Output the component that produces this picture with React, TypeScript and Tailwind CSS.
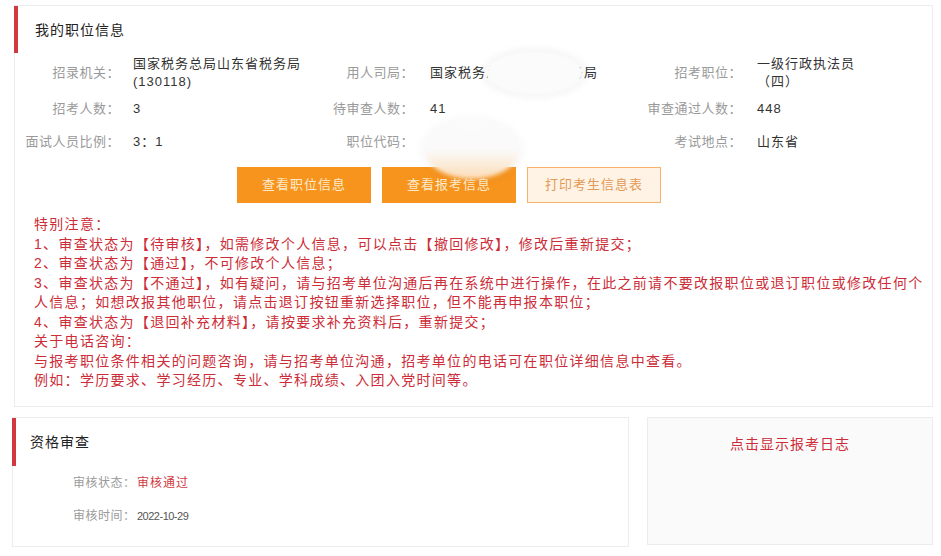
import React from 'react'

const Row = ({ cells, className }: { cells: React.ReactNode[]; className: string }) => (
  <div className={`grid grid-cols-[105px_194px_100px_228px_100px_1fr] items-center ${className}`}>
    {cells}
  </div>
)

const Label = ({ children }: { children: React.ReactNode }) => (
  <div className="text-right text-[13px] tracking-[0.5px] text-[#9a9a9a]">{children}</div>
)

const Value = ({ children, pl, extra = '' }: { children: React.ReactNode; pl: string; extra?: string }) => (
  <div className={`${pl} text-[13px] tracking-[1px] leading-[18px] text-[#333] ${extra}`}>{children}</div>
)

const notes = [
  '特别注意：',
  '1、审查状态为【待审核】，如需修改个人信息，可以点击【撤回修改】，修改后重新提交；',
  '2、审查状态为【通过】，不可修改个人信息；',
  '3、审查状态为【不通过】，如有疑问，请与招考单位沟通后再在系统中进行操作，在此之前请不要改报职位或退订职位或修改任何个人信息；如想改报其他职位，请点击退订按钮重新选择职位，但不能再申报本职位；',
  '4、审查状态为【退回补充材料】，请按要求补充资料后，重新提交；',
  '关于电话咨询：',
  '与报考职位条件相关的问题咨询，请与招考单位沟通，招考单位的电话可在职位详细信息中查看。',
  '例如：学历要求、学习经历、专业、学科成绩、入团入党时间等。',
]

export default function App() {
  return (
    <div className="w-[941px] h-[556px] bg-white pt-[5px] font-['Liberation_Sans','Noto_Sans_CJK_SC',sans-serif] overflow-hidden">
      {/* 我的职位信息 */}
      <div className="relative ml-[14px] w-[919px] h-[402px] border border-[#ececec] bg-white">
        <div className="h-[47px] flex items-center pt-[1px] pl-[17px] border-l-4 border-[#d2393f] -ml-px">
          <span className="text-[14px] tracking-[1px] text-[#222]">我的职位信息</span>
        </div>

        <Row
          className="h-[40px]"
          cells={[
            <Label key="l1">招录机关：</Label>,
            <Value key="v1" pl="pl-[13px]">国家税务总局山东省税务局(130118)</Value>,
            <Label key="l2">用人司局：</Label>,
            <Value key="v2" pl="pl-[16px]">国家税务总局山东省税务局</Value>,
            <Label key="l3">招考职位：</Label>,
            <Value key="v3" pl="pl-[15px]" extra="w-[120px]">一级行政执法员（四）</Value>,
          ]}
        />
        <Row
          className="h-[32px]"
          cells={[
            <Label key="l1">招考人数：</Label>,
            <Value key="v1" pl="pl-[13px]">3</Value>,
            <Label key="l2">待审查人数：</Label>,
            <Value key="v2" pl="pl-[16px]">41</Value>,
            <Label key="l3">审查通过人数：</Label>,
            <Value key="v3" pl="pl-[15px]">448</Value>,
          ]}
        />
        <Row
          className="h-[34px]"
          cells={[
            <Label key="l1">面试人员比例：</Label>,
            <Value key="v1" pl="pl-[13px]">3：1</Value>,
            <Label key="l2">职位代码：</Label>,
            <Value key="v2" pl="pl-[16px]">&nbsp;</Value>,
            <Label key="l3">考试地点：</Label>,
            <Value key="v3" pl="pl-[15px]">山东省</Value>,
          ]}
        />

        <div className="flex gap-[11px] pl-[222px] mt-[8px]">
          <button className="w-[134px] h-[36px] bg-[#f7941e] text-[13px] tracking-[1px] text-[#fdeacb]">查看职位信息</button>
          <button className="w-[134px] h-[36px] bg-[#f7941e] text-[13px] tracking-[1px] text-[#fdeacb]">查看报考信息</button>
          <button className="w-[134px] h-[36px] bg-[#fff3e6] border border-[#f5b46a] text-[13px] tracking-[1px] text-[#e39a55]">打印考生信息表</button>
        </div>

        <div className="mt-[12px] pl-[19px] w-[910px] text-[14px] tracking-[1.3px] leading-[19.5px] text-[#cc2d38]">
          {notes.map((n, i) => (
            <p key={i}>{n}</p>
          ))}
        </div>

        {/* redaction smudges */}
        <div className="absolute left-[471px] top-[46px] w-[97px] h-[42px] rounded-[50%] bg-[#fbfbfb] shadow-[0_0_8px_3px_rgba(0,0,0,0.05)] blur-[1px]" />
        <div className="absolute left-[410px] top-[115px] w-[94px] h-[58px] rounded-[50%] bg-linear-to-b from-[#fbfbfb] via-[#fafafa] to-[#fcdcb6] shadow-[0_0_8px_3px_rgba(0,0,0,0.04)] blur-[2px] z-10" />
      </div>

      <div className="flex mt-[10px]">
        {/* 资格审查 */}
        <div className="ml-[12px] w-[617px] h-[130px] border border-[#ececec] bg-white">
          <div className="h-[48px] flex items-center pl-[14px] border-l-4 border-[#d2393f] -ml-px">
            <span className="text-[14px] tracking-[1px] text-[#222]">资格审查</span>
          </div>
          <div className="flex items-center h-[34px] pl-[60px] text-[12px]">
            <span className="w-[64px] text-[#9a9a9a] tracking-[0.5px]">审核状态：</span>
            <span className="text-[#d2393f] tracking-[1px]">审核通过</span>
          </div>
          <div className="flex items-center h-[32px] pl-[60px] text-[12px]">
            <span className="w-[64px] text-[#9a9a9a] tracking-[0.5px]">审核时间：</span>
            <span className="text-[#555] text-[11px] tracking-[-0.5px]">2022-10-29</span>
          </div>
        </div>

        {/* 报考日志 */}
        <div className="ml-[18px] w-[286px] h-[128px] border border-[#ececec] bg-[#fafafa] flex justify-center pt-[16px]">
          <span className="text-[14px] tracking-[1px] text-[#cc2d38]">点击显示报考日志</span>
        </div>
      </div>
    </div>
  )
}
